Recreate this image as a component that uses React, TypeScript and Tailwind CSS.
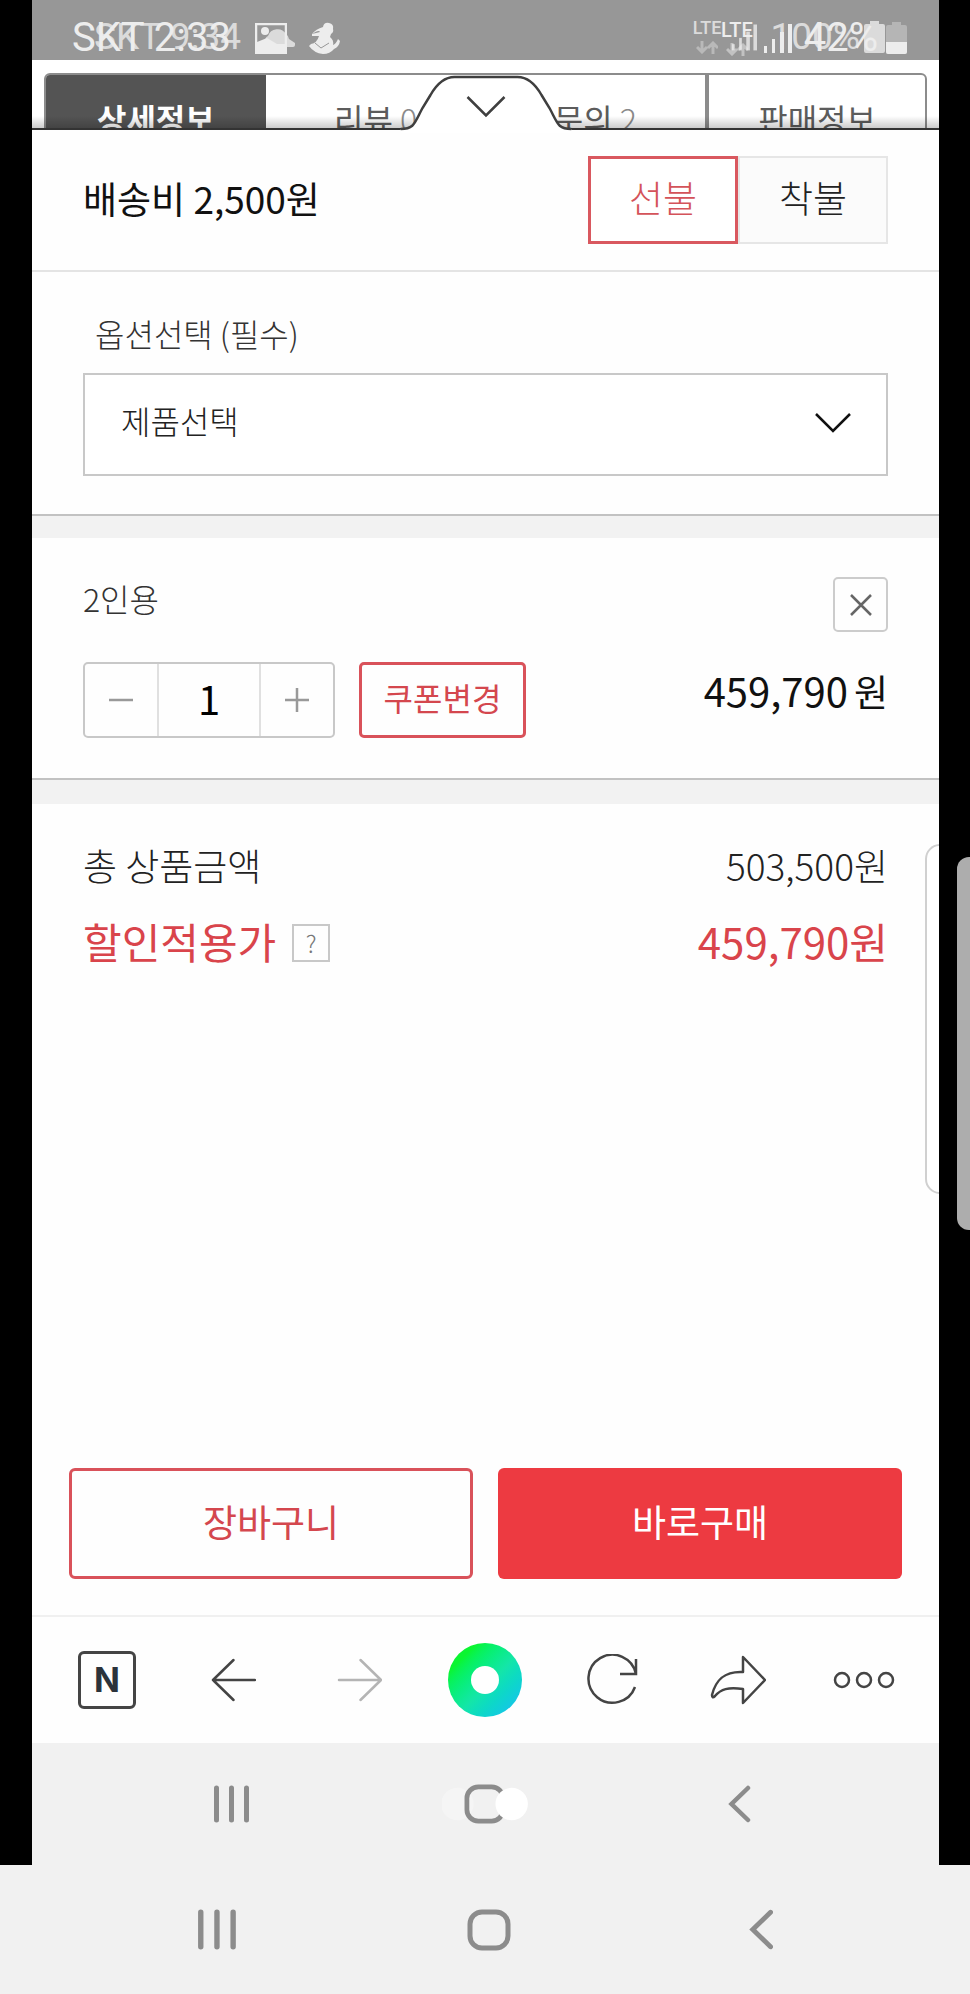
import React, { useState } from "react";

const TABS = [
  { label: "상세정보", count: null },
  { label: "리뷰", count: 0 },
  { label: "문의", count: 2 },
  { label: "판매정보", count: null },
];

const Signal: React.FC<{ className?: string }> = ({ className }) => (
  <svg viewBox="0 0 28 30" className={className} fill="currentColor" aria-hidden="true">
    <rect x="0" y="23" width="3" height="7" />
    <rect x="8" y="16" width="3" height="14" />
    <rect x="16" y="9" width="4" height="21" />
    <rect x="24" y="1" width="4" height="29" />
  </svg>
);

const Lte: React.FC<{ className?: string }> = ({ className }) => (
  <span className={`flex flex-col items-center gap-1 leading-[18px] font-medium ${className}`}>
    LTE
    <svg viewBox="0 0 22 13" className="h-[13px] w-[22px] opacity-50" fill="none" stroke="currentColor" strokeWidth="3" aria-hidden="true">
      <path d="M6 0v11M1 6l5 5 5-5M17 13V2M12 7l5-5 5 5" />
    </svg>
  </span>
);

const Battery: React.FC<{ full?: boolean }> = ({ full }) => (
  <svg viewBox="0 0 21 32" className="h-8 w-[21px]" fill="currentColor" aria-hidden="true">
    <path d="M6 0h9v3h4a2 2 0 0 1 2 2v25a2 2 0 0 1-2 2H2a2 2 0 0 1-2-2V5a2 2 0 0 1 2-2h4z" opacity={full ? 1 : 0.35} />
    {!full && <path d="M0 20h21v10a2 2 0 0 1-2 2H2a2 2 0 0 1-2-2z" />}
  </svg>
);

// Two status rows sit in the same grid cell, one over the other
const StatusBar: React.FC = () => (
  <header className="grid h-[60px] shrink-0 bg-[#979797] font-['Roboto',sans-serif] whitespace-nowrap text-[#ededed]">
    <div className="col-start-1 row-start-1 flex items-center pt-[5px] pr-[54px] pl-[62px] opacity-80">
      <span className="text-[37px]">SKT 9:34</span>
      <svg viewBox="0 0 34 20" className="ml-5 h-5 w-[34px]" fill="currentColor" aria-hidden="true">
        <path d="M8 20a6 6 0 0 1-1-11A10 10 0 0 1 25 7a7 7 0 0 1 3 5l6 4v2q0 2-2 2z" />
      </svg>
      <Lte className="ml-auto text-[18px]" />
      <Signal className="ml-2.5 h-7 w-[25px]" />
      <span className="ml-3.5 text-[37px]">100%</span>
      <span className="ml-1">
        <Battery full />
      </span>
    </div>
    <div className="col-start-1 row-start-1 flex items-center pt-2 pr-8 pl-10">
      <span className="text-[40px]">SKT 2:33</span>
      <svg viewBox="0 0 32 31" className="ml-6 h-[31px] w-8" fill="none" stroke="currentColor" strokeWidth="2.5" aria-hidden="true">
        <rect x="1" y="1" width="30" height="29" />
        <path d="M2 19 12 15l10 6 8 0v9H2z" fill="currentColor" stroke="none" />
        <circle cx="10" cy="8" r="4" fill="currentColor" stroke="none" />
      </svg>
      <svg viewBox="0 0 32 32" className="ml-[21px] h-8 w-8" fill="currentColor" aria-hidden="true">
        <path d="M15 5q1-5 6-4 5 1 4 6 1 3-2 5l-1 3q4 3 3 8 3-1 5-6l2 2q-1 6-6 8-4 5-11 5Q6 31 1 24l2-2q6-1 8-8l-7 0v-2l8-2q-1-3-8 2 4-5 11-7z" />
        <path d="m7 21 6 5 8-5" fill="none" stroke="#979797" strokeWidth="1" />
      </svg>
      <Lte className="ml-auto text-[20px]" />
      <Signal className="ml-[11px] h-[30px] w-7" />
      <span className="ml-3 text-[40px]">42%</span>
      <span className="ml-2">
        <Battery />
      </span>
    </div>
  </header>
);

const ProductTabs: React.FC = () => (
  <nav className="relative h-[68px] shrink-0 overflow-hidden bg-white px-3 pt-[13px]">
    <div className="grid h-20 grid-cols-4 overflow-hidden rounded-md border-2 border-[#8c8c8c]">
      {TABS.map((tab, i) => (
        <a
          key={tab.label}
          href="#"
          className={`pt-5 text-center text-[32px] leading-[46px] ${
            i === 0 ? "bg-[#545454] font-bold text-white" : "text-[#5c5c5c]"
          } ${i === 3 ? "border-l-4 border-[#8c8c8c]" : ""}`}
        >
          {tab.label}
          {tab.count !== null && <span className="font-light text-[#8a8a8a]"> {tab.count}</span>}
        </a>
      ))}
    </div>
    <div className="absolute inset-x-0 bottom-0 h-3 bg-gradient-to-t from-black/20 to-transparent" />
  </nav>
);

const SheetHandle: React.FC = () => (
  <button type="button" aria-label="닫기" className="absolute -top-[55px] left-1/2 w-[171px] -translate-x-1/2">
    <svg viewBox="0 0 171 58" className="block h-[58px] w-full" fill="none">
      <path d="M0 58V54C14 54 14 48 22 33L30 20C38 6 46 2 54 2H117C125 2 133 6 141 20L149 33C157 48 157 54 171 54V58z" fill="#fff" />
      <path d="M0 54C14 54 14 48 22 33L30 20C38 6 46 2 54 2H117C125 2 133 6 141 20L149 33C157 48 157 54 171 54" stroke="#3f3f3f" strokeWidth="2.5" />
      <path d="M67 22l18.500 18.500L104 22" stroke="#3f3f3f" strokeWidth="2.500" />
    </svg>
  </button>
);

const ShippingRow: React.FC = () => {
  const [pay, setPay] = useState("선불");

  return (
    <section className="flex items-center justify-between border-b-2 border-[#e4e4e4] px-[51px] py-[26px]">
      <h2 className="pb-1 text-[37px] leading-[54px] text-[#111]">배송비 2,500원</h2>
      <div className="flex">
        {["선불", "착불"].map((name) => (
          <button
            key={name}
            type="button"
            onClick={() => setPay(name)}
            className={`h-[88px] w-[150px] pb-1 text-[37px] font-light ${
              pay === name
                ? "border-[3px] border-[#d9585f] bg-white text-[#d4535a]"
                : "border-2 border-[#e6e6e6] bg-[#fbfbfb] text-[#222]"
            }`}
          >
            {name}
          </button>
        ))}
      </div>
    </section>
  );
};

const OptionSelect: React.FC = () => (
  <section className="border-b-2 border-[#c2c2c2] px-[51px] pt-[37px] pb-[38px]">
    <label htmlFor="option" className="mb-4 block pl-3 text-[32px] leading-[48px] font-light text-[#333]">
      옵션선택 (필수)
    </label>
    <div className="relative">
      <select
        id="option"
        className="block h-[103px] w-full appearance-none border-2 border-[#c8c8c8] bg-white pb-2.5 pl-9 text-[32px] font-light text-[#222]"
      >
        <option>제품선택</option>
      </select>
      <svg viewBox="0 0 36 20" className="pointer-events-none absolute top-10 right-[37px] h-5 w-9" fill="none" stroke="#111" strokeWidth="2.500" aria-hidden="true">
        <path d="M1 1l17 17L35 1" />
      </svg>
    </div>
  </section>
);

const CartItem: React.FC = () => {
  const [qty, setQty] = useState(1);

  return (
    <section className="border-b-2 border-[#c2c2c2] px-[51px] pt-[39px] pb-10">
      <div className="flex items-start justify-between">
        <h3 className="text-[32px] leading-[42px] font-light text-[#333]">2인용</h3>
        <button type="button" aria-label="삭제" className="flex size-[55px] items-center justify-center rounded-[5px] border-2 border-[#ccc]">
          <svg viewBox="0 0 22 22" className="size-[22px]" stroke="#666" strokeWidth="2.500" aria-hidden="true">
            <path d="M1 1l20 20M21 1 1 21" />
          </svg>
        </button>
      </div>
      <div className="mt-[30px] flex items-start">
        <div className="flex h-[76px] rounded-[5px] border-2 border-[#c8c8c8]">
          <button
            type="button"
            aria-label="수량 감소"
            onClick={() => setQty(Math.max(1, qty - 1))}
            className="flex w-[72px] items-center justify-center"
          >
            <svg viewBox="0 0 24 24" className="size-6" stroke="#999" strokeWidth="2.500" aria-hidden="true">
              <path d="M0 12h24" />
            </svg>
          </button>
          <input
            aria-label="수량"
            value={qty}
            onChange={(e) => setQty(Number(e.target.value) || 1)}
            className="w-[104px] border-x-2 border-[#e0e0e0] pb-1 text-center text-[40px] text-black"
          />
          <button
            type="button"
            aria-label="수량 증가"
            onClick={() => setQty(qty + 1)}
            className="flex w-[72px] items-center justify-center"
          >
            <svg viewBox="0 0 24 24" className="size-6" stroke="#999" strokeWidth="2.500" aria-hidden="true">
              <path d="M0 12h24M12 0v24" />
            </svg>
          </button>
        </div>
        <button
          type="button"
          className="ml-6 h-[76px] w-[167px] rounded-[5px] border-[3px] border-[#d9525a] pb-1.5 text-[32px] text-[#d4474e]"
        >
          쿠폰변경
        </button>
        <p className="ml-auto text-[40px] leading-[56px] text-[#111]">
          459,790<span className="ml-1.5 text-[37px]">원</span>
        </p>
      </div>
    </section>
  );
};

const Totals: React.FC = () => (
  <section className="px-[51px] pt-[34px]">
    <div className="flex justify-between text-[37px] leading-[54px] font-light text-[#222]">
      <span>총 상품금액</span>
      <span>503,500원</span>
    </div>
    <div className="mt-[19px] flex items-center justify-between text-[42px] leading-[60px] text-[#d9444b]">
      <span className="flex items-center">
        할인적용가
        <button
          type="button"
          aria-label="할인 안내"
          className="mt-1 ml-4 flex size-[38px] items-center justify-center border-2 border-[#c8c8c8] text-[24px] leading-[30px] font-light text-[#777]"
        >
          ?
        </button>
      </span>
      <span>459,790원</span>
    </div>
  </section>
);

const BrowserBar: React.FC = () => (
  <nav className="grid h-[128px] shrink-0 grid-cols-7 items-center justify-items-center border-t-2 border-[#f0f0f0] px-3 text-[#444]">
    <button
      type="button"
      className="flex size-[58px] items-center justify-center rounded-md border-[3px] border-[#444] font-['Inter',sans-serif] text-[34px] leading-none font-bold text-[#2b333b]"
    >
      N
    </button>
    <button type="button" aria-label="뒤로">
      <svg viewBox="0 0 46 44" className="h-11 w-[46px]" fill="none" stroke="currentColor" strokeWidth="2.500" strokeLinejoin="round" strokeLinecap="round">
        <path d="M23.500 2 3 22l20.500 20M3 22h42" />
      </svg>
    </button>
    <button type="button" aria-label="앞으로" className="text-[#b4b4b4]">
      <svg viewBox="0 0 46 44" className="h-11 w-[46px]" fill="none" stroke="currentColor" strokeWidth="2.500" strokeLinejoin="round" strokeLinecap="round">
        <path d="M24.500 2 45 22 24.500 42M45 22H3" />
      </svg>
    </button>
    <button
      type="button"
      aria-label="그린닷"
      className="flex size-[74px] items-center justify-center rounded-full bg-gradient-to-br from-[#0bf531] from-20% via-[#14e6a8] via-55% to-[#18c4ea] to-90%"
    >
      <span className="size-7 rounded-full bg-white" />
    </button>
    <button type="button" aria-label="새로고침">
      <svg viewBox="0 0 54 52" className="h-[52px] w-[54px]" fill="none" stroke="currentColor" strokeWidth="2.500">
        <path d="M50 33A24 24 0 1 1 51 20M35 20h16V5" />
      </svg>
    </button>
    <button type="button" aria-label="공유">
      <svg viewBox="0 0 56 50" className="h-[50px] w-14" fill="none" stroke="currentColor" strokeWidth="2.500" strokeLinejoin="round">
        <path d="M33 2 55 25 33 48V34C18 32 11 34 5 41Q2 44 2 40C6 24 15 16 33 17z" />
      </svg>
    </button>
    <button type="button" aria-label="더보기">
      <svg viewBox="0 0 62 18" className="h-[18px] w-[62px]" fill="none" stroke="currentColor" strokeWidth="2.500">
        <circle cx="9" cy="9" r="7" />
        <circle cx="31" cy="9" r="7" />
        <circle cx="53" cy="9" r="7" />
      </svg>
    </button>
  </nav>
);

const SystemNav: React.FC<{ className: string; touched?: boolean }> = ({ className, touched }) => {
  const size = touched ? "h-[38px]" : "h-[41px]";

  return (
    <nav className={`grid shrink-0 grid-cols-3 items-center justify-items-center bg-[#f1f1f1] text-[#8c8c8c] ${className}`}>
      <button type="button" aria-label="최근 앱">
        <svg viewBox="0 0 37 38" className={size} fill="none" stroke="currentColor" strokeWidth="5" strokeLinecap="round">
          <path d="M3.500 3v32M18.500 3v32M33.500 3v32" />
        </svg>
      </button>
      <button type="button" aria-label="홈">
        <svg viewBox="0 0 90 42" className={touched ? "h-10 w-[86px]" : "h-[42px] w-[90px]"} fill="none">
          {touched && <circle cx="16" cy="21" r="17" fill="#f5f5f5" />}
          <rect x="26" y="3" width="38" height="36" rx="12" stroke="currentColor" strokeWidth="5" />
          {touched && <circle cx="73" cy="21" r="17" fill="#fff" />}
        </svg>
      </button>
      <button type="button" aria-label="뒤로 가기">
        <svg viewBox="0 0 23 38" className={size} fill="none" stroke="currentColor" strokeWidth="4.500" strokeLinecap="round">
          <path d="M20 3 3.500 19 20 35" />
        </svg>
      </button>
    </nav>
  );
};

export default function App() {
  return (
    <div className="flex min-h-screen flex-col overflow-hidden bg-[#f1f1f1] font-['Noto_Sans_CJK_KR',sans-serif]">
      <div className="relative flex flex-1 flex-col bg-black pr-[31px] pl-8">
        <div className="relative flex flex-1 flex-col overflow-hidden bg-[#fefefe]">
          <StatusBar />
          <ProductTabs />
          <main className="relative flex flex-1 flex-col border-t-2 border-[#333]">
            <SheetHandle />
            <ShippingRow />
            <OptionSelect />
            <div className="h-[22px] bg-[#f2f2f2]" />
            <CartItem />
            <div className="h-6 bg-[#f2f2f2]" />
            <Totals />
            <div className="mt-auto grid grid-cols-2 gap-[25px] px-[37px] pt-10 pb-9 text-[37px]">
              <button type="button" className="h-[111px] rounded-md border-[3px] border-[#d9525a] pb-1 text-[#d4474e]">
                장바구니
              </button>
              <button type="button" className="h-[111px] rounded-md bg-[#ed3a41] pb-1 text-white">
                바로구매
              </button>
            </div>
          </main>
          <BrowserBar />
          <SystemNav touched className="h-[122px] px-[72px]" />
          {/* Edge panel grip of the inner screen */}
          <div className="absolute top-[844px] -right-4 h-[350px] w-[30px] rounded-2xl border-2 border-[#d0d0d0] bg-white" />
        </div>
        <div className="absolute top-[857px] right-0 h-[373px] w-[13px] rounded-l-xl bg-[#adadad]" />
      </div>
      <SystemNav className="h-[129px] pr-[73px] pl-[81px]" />
    </div>
  );
}
